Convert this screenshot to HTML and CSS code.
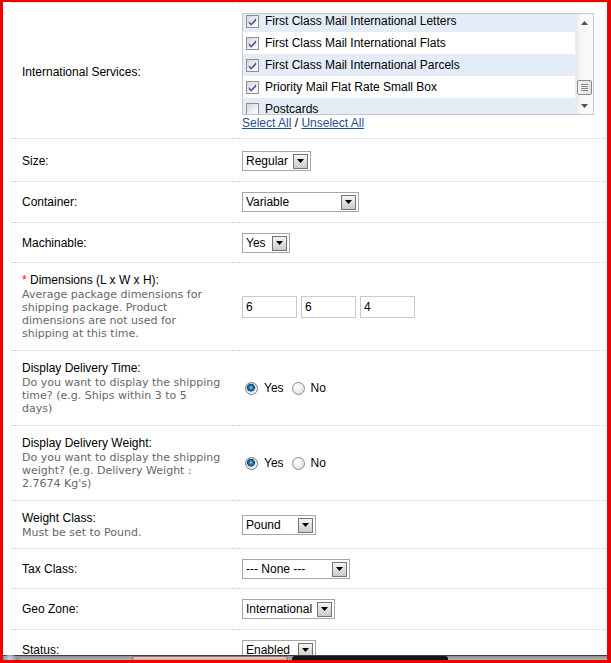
FILE: index.html
```html
<!DOCTYPE html>
<html>
<head>
<meta charset="utf-8">
<title>USPS Shipping</title>
<link rel="stylesheet" href="styles.css">
</head>
<body>
<div class="page">
  <table class="form">
    <tr class="first">
      <td>International Services:</td>
      <td>
        <div class="scrollbox">
          <div class="scroll-view">
            <div class="scroll-list">
              <div class="opt odd"><span class="cb"><svg viewBox="0 0 13 13" width="13" height="13"><path class="tick" d="M2.8 6.1 5.2 8.4 9.9 3.3 10.3 5.5 5.2 10.8 2.8 8.3z"/></svg></span>First Class Mail International Letters</div>
              <div class="opt"><span class="cb"><svg viewBox="0 0 13 13" width="13" height="13"><path class="tick" d="M2.8 6.1 5.2 8.4 9.9 3.3 10.3 5.5 5.2 10.8 2.8 8.3z"/></svg></span>First Class Mail International Flats</div>
              <div class="opt odd"><span class="cb"><svg viewBox="0 0 13 13" width="13" height="13"><path class="tick" d="M2.8 6.1 5.2 8.4 9.9 3.3 10.3 5.5 5.2 10.8 2.8 8.3z"/></svg></span>First Class Mail International Parcels</div>
              <div class="opt"><span class="cb"><svg viewBox="0 0 13 13" width="13" height="13"><path class="tick" d="M2.8 6.1 5.2 8.4 9.9 3.3 10.3 5.5 5.2 10.8 2.8 8.3z"/></svg></span>Priority Mail Flat Rate Small Box</div>
              <div class="opt odd"><span class="cb"></span>Postcards</div>
            </div>
          </div>
          <div class="sbar">
            <div class="sbtn"><svg width="7" height="4" viewBox="0 0 7 4"><path d="M3.5 0 7 4H0z"/></svg></div>
            <div class="strack"><div class="thumb"><span></span><span></span><span></span><span></span></div></div>
            <div class="sbtn"><svg width="7" height="4" viewBox="0 0 7 4"><path d="M0 0h7L3.5 4z"/></svg></div>
          </div>
        </div>
        <div class="links"><a href="#">Select All</a> / <a href="#">Unselect All</a></div>
      </td>
    </tr>
    <tr class="size-row">
      <td>Size:</td>
      <td><div class="ctl"><div class="select w-regular"><span>Regular</span><span class="btn"><svg width="7" height="4" viewBox="0 0 7 4"><path d="M0 0h7L3.5 4z"/></svg></span></div></div></td>
    </tr>
    <tr>
      <td>Container:</td>
      <td><div class="ctl"><div class="select w-variable"><span>Variable</span><span class="btn"><svg width="7" height="4" viewBox="0 0 7 4"><path d="M0 0h7L3.5 4z"/></svg></span></div></div></td>
    </tr>
    <tr class="tight">
      <td>Machinable:</td>
      <td><div class="ctl"><div class="select w-yes"><span>Yes</span><span class="btn"><svg width="7" height="4" viewBox="0 0 7 4"><path d="M0 0h7L3.5 4z"/></svg></span></div></div></td>
    </tr>
    <tr>
      <td><span class="required">*</span> Dimensions (L x W x H):<span class="help">Average package dimensions for shipping package. Product dimensions are not used for shipping at this time.</span></td>
      <td><div class="ctl dims"><input class="text" type="text" value="6"><input class="text" type="text" value="6"><input class="text" type="text" value="4"></div></td>
    </tr>
    <tr>
      <td>Display Delivery Time:<span class="help">Do you want to display the shipping time? (e.g. Ships within 3 to 5<br>days)</span></td>
      <td><div class="ctl radios"><label class="radio"><span class="rb on"></span>Yes</label><label class="radio"><span class="rb"></span>No</label></div></td>
    </tr>
    <tr>
      <td>Display Delivery Weight:<span class="help">Do you want to display the shipping weight? (e.g. Delivery Weight :<br>2.7674 Kg's)</span></td>
      <td><div class="ctl radios"><label class="radio"><span class="rb on"></span>Yes</label><label class="radio"><span class="rb"></span>No</label></div></td>
    </tr>
    <tr class="tight">
      <td>Weight Class:<span class="help">Must be set to Pound.</span></td>
      <td><div class="ctl"><div class="select w-pound"><span>Pound</span><span class="btn"><svg width="7" height="4" viewBox="0 0 7 4"><path d="M0 0h7L3.5 4z"/></svg></span></div></div></td>
    </tr>
    <tr class="tight">
      <td>Tax Class:</td>
      <td><div class="ctl"><div class="select w-none"><span>--- None ---</span><span class="btn"><svg width="7" height="4" viewBox="0 0 7 4"><path d="M0 0h7L3.5 4z"/></svg></span></div></div></td>
    </tr>
    <tr>
      <td>Geo Zone:</td>
      <td><div class="ctl"><div class="select w-intl"><span>International</span><span class="btn"><svg width="7" height="4" viewBox="0 0 7 4"><path d="M0 0h7L3.5 4z"/></svg></span></div></div></td>
    </tr>
    <tr>
      <td>Status:</td>
      <td><div class="ctl"><div class="select w-enabled"><span>Enabled</span><span class="btn"><svg width="7" height="4" viewBox="0 0 7 4"><path d="M0 0h7L3.5 4z"/></svg></span></div></div></td>
    </tr>
  </table>
</div>

<div class="taskbar">
  <span class="orb"></span>
  <span class="task task-a"></span>
  <span class="task task-b"></span>
</div>
<div class="frame"></div>
</body>
</html>
```

FILE: styles.css
```css
html, body {
  margin: 0;
  padding: 0;
  background: #fff;
}

body {
  font-family: "Liberation Sans", Arial, Helvetica, sans-serif;
  font-size: 12px;
  color: #000;
  overflow: hidden;
}

.page {
  padding: 2px 5px 0 12px;
}

.form {
  width: 100%;
  border-collapse: collapse;
  border-top: 1px dotted #cccccc;
}

.form td {
  padding: 10px;
  border-bottom: 1px dotted #cccccc;
  vertical-align: middle;
  line-height: 15px;
}

.form td:first-child {
  width: 200px;
}

.form tr.first td {
  padding-bottom: 7px;
}

.form tr.size-row td {
  padding-top: 12px;
}

.form tr.tight td {
  padding-bottom: 9px;
}

.required {
  color: #ff0000;
}

.help {
  display: block;
  font-family: "DejaVu Sans", Verdana, sans-serif;
  font-size: 11px;
  line-height: 13px;
  color: #666666;
}

/* scrollbox */
.scrollbox {
  display: flex;
  width: 350px;
  height: 100px;
  border: 1px solid #c3c9d0;
  background: #fff;
}

.scroll-view {
  flex: 1;
  overflow: hidden;
}

.scroll-list {
  margin-top: -4px;
}

.opt {
  display: flex;
  align-items: center;
  height: 22px;
  padding-left: 3px;
  white-space: nowrap;
}

.opt.odd {
  background: #e4edf7;
}

.cb {
  display: inline-flex;
  width: 13px;
  height: 13px;
  box-sizing: border-box;
  border: 1px solid #8f8f8f;
  background: linear-gradient(135deg, #d6d6d6 0%, #f0f0f0 60%, #ffffff 100%);
  margin-right: 6px;
  flex: none;
}

.cb svg {
  margin: -1px;
}

.tick {
  fill: #4b5f95;
}

.sbar {
  width: 17px;
  display: flex;
  flex-direction: column;
  background: linear-gradient(90deg, #e6e6e6 0, #f5f5f5 3px, #fafafa 100%);
  border-left: 1px solid #ececec;
}

.sbtn {
  height: 17px;
  display: flex;
  align-items: center;
  justify-content: center;
}

.sbtn path {
  fill: #505050;
}

.strack {
  flex: 1;
}

.thumb {
  margin: 49px 1px 0 1px;
  height: 15px;
  box-sizing: border-box;
  border: 1px solid #8b8b8b;
  border-radius: 2px;
  background: linear-gradient(90deg, #f3f3f3, #e2e2e2);
  display: flex;
  flex-direction: column;
  justify-content: center;
  align-items: center;
  gap: 1px;
}

.thumb span {
  display: block;
  width: 7px;
  height: 1px;
  background: #8a8a8a;
}

.links {
  line-height: 16px;
}

.links a {
  color: #244f92;
  text-decoration: underline;
}

/* controls */
.ctl {
  display: flex;
  align-items: center;
}

.select {
  display: inline-flex;
  align-items: center;
  justify-content: space-between;
  height: 20px;
  box-sizing: border-box;
  border: 1px solid #a6a6a6;
  padding: 0 2px 0 3px;
  background: #fff;
  white-space: nowrap;
}

.select .btn {
  display: flex;
  align-items: center;
  justify-content: center;
  width: 15px;
  height: 15px;
  box-sizing: border-box;
  border: 1px solid #737373;
  background: linear-gradient(#f4f4f4, #cbcbcb);
  flex: none;
}

.select .btn path {
  fill: #000;
}

.w-regular { width: 69px; }
.w-variable { width: 117px; }
.w-yes { width: 48px; }
.w-pound { width: 74px; }
.w-none { width: 108px; }
.w-intl { width: 93px; }
.w-enabled { width: 74px; }

.text {
  width: 55px;
  height: 22px;
  box-sizing: border-box;
  border: 1px solid #cacaca;
  padding: 0 3px;
  margin: 0;
  font-family: "Liberation Sans", Arial, sans-serif;
  font-size: 12px;
  color: #000;
  outline: none;
}

.dims {
  gap: 4px;
}

.radio {
  display: inline-flex;
  align-items: center;
  margin-right: 8px;
}

.radios {
  padding-left: 3px;
}

.rb {
  display: inline-block;
  width: 13px;
  height: 13px;
  box-sizing: border-box;
  border-radius: 50%;
  border: 1px solid #8d8d8d;
  background: radial-gradient(circle at 40% 35%, #ffffff 0, #f2f2f2 40%, #d4d4d4 100%);
  margin-right: 6px;
}

.rb.on {
  border-color: #7a7a7a;
  background: radial-gradient(circle at 45% 42%, #9ad6f4 0, #2f86bd 1.6px, #0c4670 3.6px, #d6d6d6 4.2px, #f6f6f6 5.8px);
}

/* desktop overlays */
.taskbar {
  position: fixed;
  left: 0;
  right: 0;
  top: 655px;
  height: 5px;
  background: linear-gradient(#3e3e3e 0, #3e3e3e 1px, #8e8e8e 1px, #b4b4b4 100%);
  display: flex;
  align-items: flex-end;
  overflow: hidden;
  z-index: 5;
}

.orb {
  width: 20px;
  height: 14px;
  margin-bottom: -9px;
  border-radius: 50%;
  background: radial-gradient(circle at 50% 30%, #c9d4dc, #6b7f8f 70%, #3b4a56);
  flex: none;
}

.task {
  width: 156px;
  height: 4px;
  border-radius: 3px 3px 0 0;
  flex: none;
}

.task-a {
  margin-left: 112px;
  background: linear-gradient(#e8d2d2, #c9aaaa);
  border: 1px solid #8d6f6f;
  border-bottom: none;
  box-sizing: border-box;
}

.task-b {
  margin-left: 4px;
  background: #151515;
}

.frame {
  position: fixed;
  inset: 0;
  border-style: solid;
  border-color: #f20000;
  border-width: 2px 4px 3px 3px;
  pointer-events: none;
  z-index: 10;
}
```
